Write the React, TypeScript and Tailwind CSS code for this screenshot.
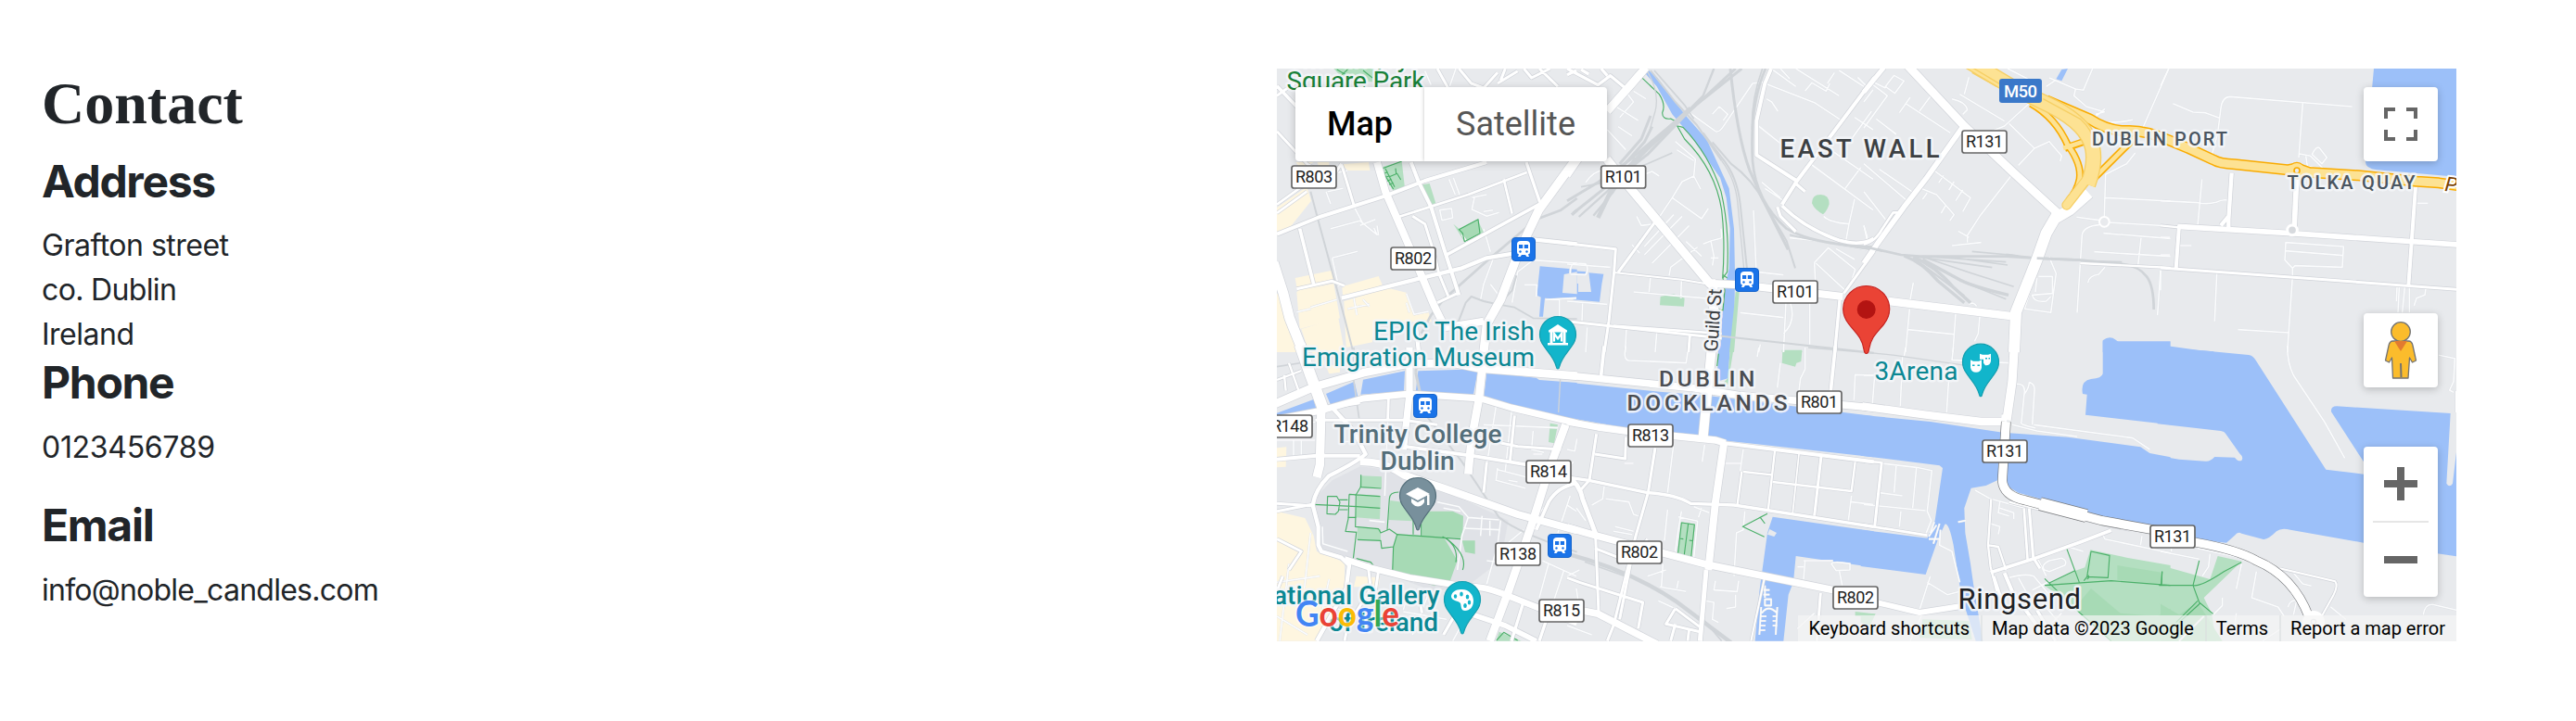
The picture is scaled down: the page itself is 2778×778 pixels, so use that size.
import React from "react";

type Road = [number, string];
type Tile = {
  at: [number, number];
  campus?: string;
  cream?: string;
  water?: string;
  land?: string;
  park?: string;
  lawn?: string;
  path?: string;
  rail?: Road[];
  minor?: string;
  roads?: Road[];
  bridge?: Road[];
  over?: Road[];
};

// Coordinates inside a tile are in thirds of a pixel.
const tiles: Tile[] = [
  {
    at: [1370, 60],
    cream:
      "M21,492 L118,425 L132,470 L60,560 L21,572Z M232,352 L318,345 L322,372 L250,372Z M82,345 L140,345 L100,368Z M80,720 L200,695 L208,735 L88,765Z M85,765 L205,738 L225,850 L95,885Z M232,748 L350,714 L362,742 L300,770 L235,790Z M238,795 L380,752 L442,768 L462,838 L512,832 L522,862 L440,862 L340,862 L330,928 L245,945Z M100,885 L220,850 L240,960 L125,960Z M21,772 L45,775 L78,895 L92,960 L21,960Z M152,345 L190,345 L190,375 L160,372Z",
    water: "M872,682 L992,692 V790 L888,785 L882,845 L870,845 L875,782 L862,776Z",
    land: "M950,708 L992,700 V772 L945,768Z",
    park: "M205,42 L335,42 L330,85 L240,80Z M355,362 L425,342 L435,428 L397,437Z M492,418 L515,414 L535,478 L515,485Z M592,545 L610,560 L670,530 L690,572 L630,606Z",
    lawn: "M612,562 L672,532 L678,575 L628,602Z",
    path: "M610,563 L672,530 L678,576 L628,602 L622,575Z M355,368 L425,342 M360,370 L398,432 M372,366 L402,425 M366,382 L380,377 M372,394 L386,389 M378,406 L392,400 M384,418 L398,412 M385,392 L410,382 L422,402 M407,382 L405,365 M215,45 L262,72 M250,45 L225,68 M300,48 L330,72",
    rail: [
      [8, "M488,900 L520,840 L560,790 L700,665 L860,530 L940,500 L992,462"],
      [6, "M130,440 L162,560 L200,700 L240,850 L268,960"],
      [6, "M796,712 L782,760 L740,806 L690,795 L650,780 L632,800 L608,862"],
      [5, "M740,806 L790,815 L850,850 L992,852"],
      [10, "M975,515 L992,500"],
    ],
    minor:
      "M200,655 L282,634 M195,560 L290,535 L345,580 L335,558 M340,530 L290,550 M345,550 L350,582 M270,488 L300,545 M200,655 L220,745 L238,745 M660,460 L652,498 L700,520 L740,508 M652,460 L700,450 M548,500 L586,495 L590,525 L555,533Z M690,560 L712,635 M440,770 L465,838 L512,828 M720,660 L690,740 L680,790 M712,740 L735,770 M782,800 L800,700 L850,662 L992,672 M822,742 L862,742 L860,780 M592,395 L612,450 M578,400 L598,450 M465,372 L480,405 M500,50 L520,95 M575,105 L560,70 M600,42 L580,100 M690,505 L720,500 M250,820 L320,805 M270,785 L280,840 M300,790 L320,812 M130,815 L215,790 M85,830 L130,820 M500,690 L520,690 M890,790 L990,785 M935,790 L935,850 M440,800 L450,832 M185,440 L235,430 M210,380 L250,372 M180,440 L195,480 M620,580 L640,610",
    roads: [
      [8, "M21,482 L110,418"],
      [8, "M21,510 L118,440"],
      [9, "M21,245 L120,352 L200,395 L230,350"],
      [11, "M21,98 L88,168"],
      [9, "M21,130 L80,88"],
      [9, "M540,42 L575,105 M610,42 L650,90 L690,105 L735,55 M735,90 L800,50 M870,42 L930,100 M760,42 L745,80 M820,42 L845,72 L905,42"],
      [9, "M85,755 L200,730 L240,745"],
      [11, "M95,560 L140,740"],
      [9, "M230,352 L272,490"],
      [12, "M21,578 L160,522 L370,455 L500,405 L700,345"],
      [8, "M415,522 L640,450 L830,378"],
      [9, "M460,520 L500,545 L530,640 L545,705 L575,778 M605,770 L540,800"],
      [12, "M455,345 L480,410 L520,490 L560,620 L610,775"],
      [11, "M570,645 L872,480"],
      [10, "M828,345 L872,475"],
      [8, "M755,400 L782,512"],
      [13, "M230,785 L480,722 L620,688 L700,655 L790,640"],
      [13, "M850,595 L992,610"],
      [24, "M345,345 L372,440 L450,620 L530,810 L565,880 L690,860"],
      [13, "M470,870 L480,960"],
      [28, "M985,340 L868,500 L802,640 L745,790 L700,870 L690,960"],
      [32, "M10,670 L42,770 L62,850 L108,965"],
    ],
  },
  {
    at: [1690, 60],
    water:
      "M248,52 L262,46 L292,72 L380,190 L452,272 L524,430 L540,560 L543,700 L540,960 L495,960 L507,760 L524,690 L527,560 L515,460 L495,395 L400,260 L340,190 L290,100Z M70,703 L118,707 L112,740 L105,797 L20,790 L20,772 L26,738 L36,738 L36,765 L78,765Z M-20,770 L20,775 V788 L-20,784Z M20,697 L66,700 L64,708 L20,704Z M-20,692 L10,694 L8,704 L-20,702Z",
    park: "M792,478 Q792,450 820,450 Q848,450 848,480 Q842,502 828,514 Q800,498 792,478Z M302,780 L345,772 L380,785 L378,812 L300,808Z M545,765 L557,765 L540,960 L525,960Z M695,953 H760 V960 H695Z",
    path: "M252,46 L235,65 L298,125 Q320,160 308,185 Q308,208 335,204 L350,212 M355,226 L380,270 Q480,370 500,500 Q512,600 503,722 M358,228 L375,232 Q460,320 498,440 Q526,560 518,700 L504,720 L510,760 L504,825 L492,822 M505,710 L518,720",
    rail: [
      [9, "M0,470 L100,410 L200,340 L360,205 L565,42"],
      [9, "M20,510 L120,430 L260,320 L380,195 L545,42"],
      [14, "M100,525 L160,400 L260,300 L400,170"],
      [7, "M38,522 L140,430 L240,330 M85,518 L150,440 L220,330"],
      [9, "M170,350 L240,270 L270,195 M170,370 L250,280 L275,230"],
      [5, "M180,380 L260,350 L340,315 M45,425 L180,400"],
      [7, "M360,210 L440,130 L475,42"],
      [4, "M260,52 Q300,120 285,180 L262,260"],
      [6, "M270,48 L350,150 L420,225 L500,340"],
      [5, "M282,48 L380,160 L410,205"],
      [6, "M440,250 L500,330 Q550,390 560,480 L582,692"],
      [4, "M500,340 Q545,400 552,480 L572,690"],
      [9, "M528,42 Q550,260 590,370 L630,460 L715,628"],
      [6, "M470,280 L530,350 Q600,400 640,480 L710,600 L738,688"],
      [8, "M642,42 Q590,160 600,340 Q610,470 710,560 Q790,610 992,620"],
      [5, "M632,42 Q596,140 598,240 M720,580 Q800,600 992,630"],
      [6, "M0,866 L130,872 L500,908 L992,962"],
    ],
    minor:
      "M300,520 L340,460 L372,408 L410,390 L432,432 M340,460 L435,528 L457,495 M250,618 L345,515 M250,645 L372,520 M275,672 L395,550 M330,712 L335,685 L422,620 M440,610 L465,600 L475,650 L470,680 M465,655 L490,655 M465,600 L500,590 L498,560 M410,390 L415,335 L350,278 M355,305 L410,340 M225,520 L240,550 L280,545 M210,612 L235,640 M385,602 L435,650 M640,90 L800,152 L885,208 M740,42 L880,130 M690,42 L720,75 M645,140 L662,150 L682,180 M612,222 L700,292 M770,115 L792,88 L838,115 L850,90 M900,430 L950,362 M865,55 L842,90 M880,48 L960,100 M780,345 L990,500 M845,300 L990,400 M630,410 L690,460 M830,520 Q850,540 912,545 L930,465 M902,600 L912,545 M660,42 L740,100 M640,430 L700,470 M480,245 Q492,250 505,230 L600,90 L640,85 M390,180 L480,245 M470,190 L492,165 L520,190 L505,210 M603,500 L612,700 L700,710 M270,715 L265,765 M215,765 L500,790 M370,725 L368,785 M0,795 L130,805 M560,832 L700,848 M708,800 L700,960 M785,800 V935 M722,800 Q742,860 700,900 M800,670 L805,770 M800,670 L845,622 L932,692 L915,745 L900,760 L805,672 M870,625 L930,660 M720,590 L800,598 L990,632 M185,110 L215,150 L170,200 M215,115 L255,140 M150,160 L230,210 M130,240 L190,305 M165,230 L210,260 M60,410 Q90,370 120,372 M250,385 L275,375 L298,390 M0,675 L140,685 M10,705 Q10,670 30,672 L60,674 Q72,690 60,710 L10,708 M65,880 L60,960 M192,880 L188,960 M290,895 L285,960 M625,935 L620,960 M50,800 L48,860 M970,100 L940,70 M850,270 L870,230 M930,200 L990,240 M990,110 L960,150 M985,180 L920,270 M960,550 L972,590",
    roads: [
      [10, "M0,42 L100,95 L140,65 L200,115 M45,45 L70,60 M110,42 L130,65 M0,62 L30,48"],
      [9, "M165,702 L285,538"],
      [6, "M150,702 L370,725 L470,742"],
      [9, "M0,608 L157,626 L152,700 L135,860 L120,960"],
      [9, "M0,860 L500,915"],
      [9, "M397,905 L393,960"],
      [8, "M150,875 L500,900"],
      [12, "M660,42 L640,90 L613,210 L613,322 L742,405"],
      [12, "M995,70 L742,408 L695,482"],
      [10, "M735,410 L770,440"],
      [10, "M680,490 L690,520 L740,570"],
      [11, "M695,486 Q770,560 880,598 Q950,618 992,592"],
      [9, "M992,635 L895,770"],
      [10, "M882,790 L866,960"],
      [22, "M0,388 L40,330"],
      [26, "M130,180 L210,90 L255,38"],
      [28, "M128,335 L180,400 L462,738 L480,738"],
      [24, "M470,738 L560,742 L892,780"],
      [30, "M472,740 L475,800 L470,960"],
    ],
  },
  {
    at: [2010, 60],
    water: "M640,45 L660,42 L640,82 L622,76Z M773,960 V922 Q795,905 815,920 L830,932 L992,946 V960Z",
    rail: [
      [8, "M0,618 L120,645 L180,650 L460,650 L560,656 L700,662 L840,675 Q890,682 915,715 Q938,745 938,822"],
      [5, "M835,668 L700,664"],
      [10, "M130,648 Q190,670 240,730 L325,800 M160,652 Q230,680 290,750 L345,800"],
      [7, "M160,655 Q220,700 325,778"],
      [10, "M190,660 L300,720 Q340,745 468,775"],
      [5, "M180,660 L340,740 L460,788 M200,655 L350,705 L485,748 M160,650 L415,686 M170,650 L300,655 L465,678 M190,650 L460,668 M350,634 L470,645 L560,655"],
      [9, "M460,645 L500,650"],
    ],
    minor:
      "M30,95 L76,130 L0,235 M150,135 L115,185 M135,155 L280,250 M40,205 L105,255 M180,180 L217,130 M70,100 L98,64 L130,82 L100,122Z M20,80 L70,105 M310,125 L455,212 M285,140 Q330,150 335,175 L320,190 M325,125 L340,70 M540,150 L455,228 L400,250 M470,220 L552,300 L500,355 M552,300 L600,278 L640,325 L635,342 M225,370 L345,460 L320,505 M242,412 L258,388 M275,435 L292,408 M297,470 L320,435 M185,430 L235,450 L292,515 L278,535 M250,510 L265,485 M190,465 L205,445 M480,385 L375,520 L335,582 L335,605 M305,568 L340,588 M285,615 L380,605 M992,30 L900,240 M778,520 L782,385 L850,350 L878,315 M780,460 L992,471 M688,523 L762,533 M792,540 L992,552 M762,548 Q712,552 706,580 L690,832 M775,575 L992,592 M745,635 L992,650 M897,590 L887,680 M960,695 L950,840 M780,685 L760,708 Q728,712 725,735 M148,820 L135,960 M143,887 L290,902 M297,835 L288,960 M375,845 L370,900 L358,925 M160,735 L150,790 M555,712 L520,820 L605,832 L622,705 L605,665 L600,650 M565,715 H610 V770 L545,775 Q550,800 590,795 L605,780 M560,720 L555,765 M600,72 L685,108 L680,130 L720,165 L778,182 L750,190 M685,108 L710,112 L740,42 M760,215 Q820,220 870,208 M590,100 L620,80 M740,205 L780,172 M0,350 L140,470 M50,368 L155,440 M0,440 L70,530 M0,550 L10,595 M465,42 L530,75 M340,805 Q355,795 365,812",
    roads: [
      [7, "M700,672 L992,687"],
      [8, "M0,611 Q40,600 60,560 L95,508 H115"],
      [15, "M65,38 L0,118"],
      [17, "M322,228 L200,400 L130,490 L50,600 L0,672"],
      [27, "M140,30 L325,228 L480,375 L625,508"],
      [25, "M80,795 L475,843"],
      [36, "M728,445 L665,500 L622,525"],
      [36, "M628,510 L590,575 L560,660 L492,830 L486,960"],
    ],
  },
  {
    at: [2330, 60],
    water: "M690,42 H957 V392 L700,370 Q660,365 663,340 Z M0,944 L172,958 V966 H0Z",
    minor:
      "M26,42 L0,98 M165,325 L185,250 L195,170 Q200,133 225,133 L620,165 M40,155 L105,183 L145,185 L190,202 M460,155 L447,330 M490,320 Q505,290 515,300 L538,330 L522,350Z M450,318 L485,325 L525,365 M470,325 L475,358 L520,366 M215,468 Q200,465 180,475 Q150,482 120,476 L0,470 M134,400 L120,550 M0,588 H30 M60,615 H100 M0,645 H30 M405,605 L592,618 L588,685 L435,680 L427,688 L402,662Z M403,632 L590,647 M427,688 V715 L410,960 M182,705 L175,860 M250,887 L415,897 M765,750 L763,795 M772,750 L768,832 M790,750 L782,832 M805,750 V832 M858,755 L855,775 L828,785 L820,810 M830,478 H865 M0,695 V760",
    roads: [
      [12, "M60,550 L50,690"],
      [13, "M230,380 L220,530 L220,560 M220,520 L195,550"],
      [17, "M440,400 L432,565"],
      [17, "M55,553 L420,575 L960,612"],
      [9, "M0,687 L420,717 L960,757"],
      [12, "M825,425 L802,745"],
      [7, "M0,550 L60,556"],
    ],
  },
  {
    at: [1370, 375],
    campus: "M150,480 L200,430 L290,385 L380,395 L600,480 L770,560 L745,690 L640,770 L530,790 L330,715 L165,650 L140,520Z",
    cream:
      "M21,530 L112,552 L140,610 L150,660 L240,695 L240,780 L150,950 L21,950Z M278,740 L355,745 L350,775 L270,775Z M245,870 L280,870 L240,930Z M21,325 L52,322 L50,386 L21,388Z M130,0 L160,0 L175,55 L150,60Z M180,60 L225,55 L225,80 L190,85Z",
    water:
      "M21,220 L21,212 L140,168 L152,212Z M180,150 L272,110 L286,172 L200,197Z M300,104 L435,76 L432,142 L292,152Z M478,76 L672,70 L657,152 L470,146Z M700,80 L860,98 L870,105 L992,114 V238 L690,168Z",
    park: "M293,415 L360,418 V455 L288,453Z M280,478 L357,480 L354,556 L275,550Z M282,583 L357,588 V625 L280,622Z M388,495 L460,505 V562 L382,558Z M905,245 L930,250 L918,310 L900,306Z M740,920 L812,950 H730Z",
    lawn: "M490,530 L590,530 L624,545 L622,618 L490,610Z M410,605 L560,612 L605,690 L580,760 L530,772 L395,727 L398,645Z M620,625 H662 V668 L630,662Z",
    path: "M140,508 L280,515 L355,520 M293,412 V450 L275,480 M293,452 L358,456 M255,475 L355,482 M255,475 L252,555 L243,595 L280,598 M250,550 H278 M185,482 L215,482 L225,500 L220,530 L210,540 L183,538Z M222,493 H250 M222,525 H250 M277,480 L275,580 L350,587 L357,600 L385,588 L410,605 L398,645 L360,650 L357,625 L282,622 M278,600 L268,685 M278,683 L325,695 L335,708 L395,727 L398,645 M410,605 L615,620 M415,468 Q385,468 385,490 L378,590 M462,560 V605 M488,570 V608 M557,612 Q610,640 600,695 M565,615 Q640,670 622,720 M732,948 L755,922 L800,948",
    rail: [
      [9, "M470,80 L485,150"],
      [6, "M500,215 L620,370 L740,550 Q800,600 992,662"],
      [5, "M270,0 V110 L300,320"],
      [9, "M480,0 L470,80"],
      [5, "M21,62 L130,45"],
      [4, "M938,100 L932,210"],
    ],
    minor:
      "M168,580 L170,635 L250,660 M540,500 L610,515 L640,550 L740,558 M640,550 L620,610 L605,720 M745,560 L735,640 L700,765 M560,520 L615,530 M685,545 L680,610 M710,560 V610 M625,585 L740,590 M735,390 L730,430 L825,455 M735,395 L830,420 M770,430 L800,435 M850,270 L845,330 L885,340 M850,345 H880 M235,305 L295,302 M21,300 L145,300 M380,235 L370,480 M75,300 V350 M100,300 V350 M690,250 L930,260 M730,190 L700,380 M780,210 L760,400 M820,590 L760,640 M970,480 L930,600 M900,500 L850,560 M880,690 L990,740 M900,700 L870,810 M950,720 L910,840 M21,760 L160,740 M60,700 L30,950 M130,600 L110,780 M190,750 L160,890 M60,800 L230,850 M21,870 L120,930 M430,855 L570,880 M450,780 L430,850 M510,800 L460,930 M640,860 L590,950 M21,250 L160,240 M320,560 L370,565 M700,690 L780,700",
    roads: [
      [7, "M60,50 L95,150 M21,105 L100,75 M45,90 L50,140"],
      [9, "M145,235 L430,235 L540,250"],
      [9, "M382,160 L380,235"],
      [8, "M160,200 L290,180"],
      [11, "M430,320 L650,350 L925,395"],
      [9, "M655,290 L800,320 L940,330 M700,370 L690,470 M790,220 L775,370"],
      [9, "M21,505 L135,512 M21,530 L135,508"],
      [12, "M21,362 L150,350 L290,350"],
      [13, "M205,200 L270,270 L308,345 Q280,370 190,415 Q145,460 137,510 L155,580 L155,640 L165,660 L230,680 L255,705 L245,780 L150,950"],
      [9, "M21,620 L100,660 L60,720 M40,740 L21,790"],
      [9, "M315,700 L325,780 L250,900 L240,950 M350,720 L340,790"],
      [10, "M820,820 L780,950 M900,860 L870,950 M480,780 L490,860 M560,930 L600,860"],
      [11, "M990,440 Q930,450 900,500 L860,590"],
      [24, "M290,370 Q370,368 430,412 L560,455 L800,540 L992,592"],
      [20, "M240,685 L330,715 L450,745 L640,775 Q690,770 780,808 L992,892"],
      [17, "M640,860 L760,900 L860,950"],
      [26, "M955,250 L900,400 L850,560 L770,790 L710,950"],
      [22, "M450,0 L450,150 L430,330"],
      [26, "M685,70 L675,165 L650,300 L640,410"],
      [21, "M21,232 L160,205 L300,165 L450,150 L680,165 L780,195 L992,245"],
      [26, "M10,185 L140,128 L300,82 L450,52 L600,52 L680,68 L992,92"],
      [36, "M95,-10 L130,90 L175,210"],
      [28, "M165,190 L160,380 L150,420"],
    ],
  },
  {
    at: [1690, 375],
    water:
      "M-10,112 L300,143 L450,155 L992,222 V355 L500,300 L200,262 L-10,225Z M490,-5 H528 L520,100 L485,110Z M665,548 L992,595 V712 L740,675 L732,760 L716,800 L700,950 L608,950 L622,790 L648,600Z",
    park: "M528,-5 H540 L520,120 L500,120 L520,100Z M697,10 L760,12 L757,45 L742,50 L738,62 L695,50Z M370,565 L414,572 L402,683 L356,675Z M932,855 L992,862 V870 H932Z",
    land: "M655,588 L678,600 L670,612 L648,605Z",
    path: "M370,567 L412,573 L401,680 L358,672Z M392,570 L378,678 M364,618 L376,620 M395,624 L407,626 M648,538 L568,580 L638,613 M625,550 L640,570 M648,538 L620,552 M490,20 L485,60",
    rail: [
      [13, "M0,668 Q200,720 350,820 L530,955"],
      [5, "M57,694 L200,745 M440,880 L500,950"],
      [4, "M780,0 L992,18"],
    ],
    minor:
      "M190,-5 Q180,40 200,42 L385,50 L393,-5 M345,310 L325,470 M445,315 L437,370 M570,330 L560,400 M510,375 H565 M620,0 L615,30 M770,0 L770,70 L755,100 L750,140 M690,50 L680,130 M928,170 L932,88 L990,90 M0,330 L25,335 L32,295 M0,395 L20,370 M120,450 L115,490 L80,510 M125,490 L200,500 L215,540 L230,545 M150,595 L210,605 M155,580 L215,595 M325,525 L315,625 M370,530 L360,590 L350,660 M360,548 L422,562 L410,680 M575,530 L570,590 L548,600 L540,740 M480,755 L475,785 L550,790 L555,755 M545,800 V840 L515,845 M445,820 L475,825 L470,880 L490,890 M260,740 L320,720 M300,775 L385,790 M360,755 L355,780 M310,700 L305,775 M920,480 L910,560 M920,500 L990,508 M770,690 L765,750 M745,710 H765 M765,690 L860,690 M855,700 Q860,690 915,700 V720 L870,722Z M880,720 L890,770 M215,375 L185,375 M30,520 L60,560 M0,510 L30,530 M435,520 L425,550 M410,515 L460,535 M295,820 L350,845 M800,860 L745,910 M640,770 V810 M628,840 L622,930 M680,840 L675,930 M635,785 H655 M635,800 H655 M640,815 H660 V835 H640Z M630,860 Q650,830 680,860 M628,870 H645 M627,885 H643 M626,900 H642 M625,915 H641 M665,870 H680 M665,885 H680 M665,900 H680 M0,740 L40,720 M30,780 L40,850 M0,900 L80,930",
    roads: [
      [9, "M95,280 L72,430 L40,465"],
      [9, "M90,345 L188,360 L190,290"],
      [9, "M285,325 L262,470 L222,610 L150,900 L130,950"],
      [7, "M672,335 L650,530 M570,402 L662,412 M565,402 L550,515"],
      [9, "M822,352 L800,545"],
      [7, "M932,370 L920,465 L665,435"],
      [5, "M750,345 L730,535"],
      [6, "M640,740 L595,950"],
      [9, "M820,795 L808,950"],
      [9, "M0,745 L40,760 L245,825 L230,910 M205,700 L170,880"],
      [9, "M350,845 L320,895 L430,920 M350,845 L430,905 M350,895 L335,950 M395,910 L390,950"],
      [9, "M90,650 L205,695 L260,620"],
      [10, "M0,420 L70,430 L260,470 Q350,475 400,505 L540,510 L992,580"],
      [11, "M120,-5 L110,90 M868,-5 L852,150"],
      [15, "M0,415 Q40,440 50,490 L95,610"],
      [9, "M92,610 L102,860"],
      [23, "M0,842 L100,862 L290,960"],
      [23, "M0,582 L90,608 L450,702 L862,785"],
      [15, "M450,720 L430,950"],
      [24, "M508,305 L480,500 L457,720"],
      [12, "M510,310 L992,370"],
      [22, "M0,240 L100,258 L200,272 L480,300 L512,310"],
      [30, "M468,-5 L440,290"],
      [23, "M0,90 L400,130 L560,155 L992,195"],
    ],
  },
  {
    at: [2010, 375],
    water:
      "M-10,218 L215,240 L450,275 L660,290 L895,322 L925,342 L992,355 V600 L770,545 L500,470 L432,430 L395,447 L347,455 L325,520 L328,600 L345,700 L355,770 L385,950 L362,950 L330,850 L310,770 L290,640 Q275,565 262,572 L240,620 L200,735 L-10,708 V590 L205,617 L230,560 L255,390 L245,382 L-10,350Z M773,-20 V85 Q770,100 735,102 Q700,108 708,150 L722,152 L717,218 L992,250 V-20Z",
    park: "M733,655 L850,680 L992,705 V950 L800,950 L690,850 L585,770 L685,722 L715,712Z M-10,860 L38,862 L20,900 L-10,890Z M190,880 L340,885 L350,945 L180,940Z",
    lawn: "M820,705 L965,728 V765 L820,752Z M735,780 L830,860 L950,870 L992,845 V950 L800,950 L680,845Z",
    path: "M585,770 L800,755 L992,770 M600,762 L683,722 M656,650 L697,760 M585,748 L700,860 L800,950 M735,660 L795,673 L790,745 L722,742Z M722,742 L712,755 M722,735 Q735,742 722,750 M965,725 L962,768",
    rail: [[4, "M0,15 L100,25 L330,58"]],
    minor:
      "M135,0 L130,30 M125,30 L118,190 M290,0 L285,40 L470,50 M278,50 L268,210 M35,90 L28,180 M0,90 H35 M490,118 Q520,115 520,140 L510,240 Q500,250 555,260 M535,112 Q555,120 552,140 L545,250 M520,150 Q535,130 535,112 M480,250 L560,270 L690,288 M550,250 L870,293 L925,330 M55,375 L170,388 L220,398 L205,530 L218,560 L200,605 M105,380 L98,470 M170,390 L158,520 M50,470 L125,480 M0,508 L200,528 M120,530 L115,580 M360,462 L410,490 L520,520 M440,500 L435,535 L470,545 M410,570 L440,580 L435,605 M440,520 L485,535 V555 M228,565 L215,600 M245,570 L225,635 M235,575 L210,612 M248,590 L245,640 L285,660 L310,760 M210,620 H245 M215,740 L180,850 M205,760 L270,800 L310,790 M660,645 L710,660 M585,720 Q570,705 600,690 L640,682 Q660,690 650,705 L600,725Z M470,745 Q520,730 550,740 L600,800 M500,745 L530,800 M545,785 L595,760 M560,680 L590,740 M330,560 L305,565 M770,600 L780,620 L992,665 M900,610 L895,640 M580,830 L640,900 M640,860 L600,900 M190,860 L150,950 M0,905 L60,940 M480,500 L475,485",
    roads: [
      [8, "M0,368 L58,372"],
      [9, "M58,370 L35,580"],
      [8, "M0,575 L205,608"],
      [7, "M412,490 L402,640 L410,710 L430,790 M405,640 L435,645 L460,720 M470,500 L700,555 L860,590"],
      [8, "M518,520 L530,690"],
      [9, "M535,520 L548,680 L570,715"],
      [11, "M410,728 L560,680 L700,630 L800,592"],
      [12, "M455,730 L480,790 L560,900"],
      [10, "M560,850 L620,950 M420,740 L450,830"],
      [18, "M40,825 L180,858 L310,838"],
      [25, "M-5,190 L200,218 L380,240 L450,240"],
      [28, "M487,-5 L480,110 L462,235"],
      [30, "M445,232 L462,232"],
    ],
    bridge: [
      [28, "M460,240 L448,430 Q452,480 520,494 L770,560 L992,600"],
      [40, "M570,506 L720,545"],
    ],
  },
  {
    at: [2330, 375],
    water:
      "M-10,-10 L120,8 L285,24 Q298,26 306,38 L535,395 L657,410 V632 L420,590 Q390,582 375,595 Q345,625 330,620 L262,602 Q250,595 240,608 L213,632 L-10,608 V350 L60,362 L145,368 Q160,370 175,354 L240,356 Q250,370 262,366 Q270,355 255,342 L210,278 Q207,272 195,270 L-10,247Z M570,190 L938,213 L925,440 Q935,455 945,440 L958,330 V676 L657,632 V370 L552,208 Q550,190 570,190Z",
    park: "M0,705 L160,750 L185,675 L262,692 L140,810 L165,860 L180,950 H-10Z",
    lawn: "M0,830 L60,865 L120,825 L200,950 H0Z",
    path: "M-5,770 L105,770 Q130,775 205,725 L262,695 M125,690 L105,770 L125,825 L170,862 M120,820 L50,890 M128,828 L60,890 M5,725 L3,770",
    minor:
      "M410,-5 Q410,50 430,90 L530,240 L596,358 M900,25 L952,35 L948,110 L935,138 L948,145 M0,660 L125,685 M160,668 L155,710 L135,740 M262,700 L245,782 M245,860 L240,900 M200,810 V835 L170,865 M310,725 L295,810 L380,840 L400,870 M430,730 L460,765 L488,772 M412,840 Q420,815 440,820 L430,865 M550,840 L600,880 M850,865 Q855,830 880,832 L957,850 M390,910 L330,950 M120,650 L300,690 M35,650 V660 M60,950 L140,870",
    roads: [[6, "M385,715 L565,757 Q575,770 560,800 L510,890"], [4, "M955,140 V210"]],
    bridge: [[27, "M-10,595 L110,630 Q250,655 310,690 Q430,740 480,872"]],
    over: [[30, "M480,865 L500,880"]],
  },
];

function Layer({ pick }: { pick: (t: Tile) => React.ReactNode }) {
  return (
    <>
      {tiles.map((t, i) => (
        <g key={i} transform={`translate(${t.at[0]} ${t.at[1]}) scale(0.33333)`}>
          {pick(t)}
        </g>
      ))}
    </>
  );
}

const strokes = (list: Road[] | undefined, color: string, extra = 0) =>
  (list ?? []).map(([w, d], i) => <path key={i} d={d} stroke={color} strokeWidth={w + extra} fill="none" />);

const motorwayEast = "M590,145 L730,205 Q790,245 850,243 Q910,240 990,275 L1050,300 L1130,337 Q1150,350 1200,352 L1370,370 L1400,364 L1440,378 L1600,388 L1790,407 L1860,412 L1930,422";
const motorwayMain = "M335,15 L480,102 L610,165 Q725,225 740,300 Q750,350 725,418";

function Badge({ x, y, children }: { x: number; y: number; children: string }) {
  return (
    <g>
      <rect x={x - 24} y={y - 12} width="48" height="24" rx="2.5" fill="#fff" stroke="#666" strokeWidth="1.7" />
      <text x={x} y={y + 6.3} textAnchor="middle" fontSize="18" textLength="40" fill="#222">
        {children}
      </text>
    </g>
  );
}

function Train({ x, y }: { x: number; y: number }) {
  return (
    <g transform={`translate(${x} ${y})`}>
      <rect x="-12.5" y="-12.5" width="25" height="25" rx="3.5" fill="#1a73e8" stroke="#1765cc" />
      <path d="M-3,-9 H3 Q7,-9 7,-5.500 V3 Q7,5 5,5.500 L6,8 H3.500 L2,6 H-2 L-3.500,8 H-6 L-5,5.500 Q-7,5 -7,3 V-5.500 Q-7,-9 -3,-9Z" fill="#fff" />
      <path d="M-5,-5 H-0.800 V-1 H-5Z M0.800,-5 H5 V-1 H0.800Z" fill="#1a73e8" />
      <circle cx="-3.500" cy="2.500" r="1.200" fill="#1a73e8" />
      <circle cx="3.500" cy="2.500" r="1.200" fill="#1a73e8" />
    </g>
  );
}

function Pin({ x, y, fill, edge, children }: { x: number; y: number; fill: string; edge: string; children: React.ReactNode }) {
  return (
    <g transform={`translate(${x} ${y})`}>
      <path
        d="M0,37 Q-1.300,37 -1.700,34.500 C-4,25 -10,20 -15,12.500 Q-19.500,6.500 -19.500,0 A19.500,19.500 0 0 1 19.500,0 Q19.500,6.500 15,12.500 C10,20 4,25 1.700,34.500 Q1.300,37 0,37Z"
        fill={fill}
        stroke={edge}
        strokeWidth="1.200"
      />
      {children}
    </g>
  );
}

type LabelProps = {
  x: number;
  y: number;
  size: number;
  w?: number;
  fill: string;
  weight?: number;
  anchor?: "start" | "end" | "middle";
  children: string;
};

function Label({ x, y, size, w, fill, weight = 400, anchor = "start", children }: LabelProps) {
  return (
    <text
      x={x}
      y={y}
      fontSize={size}
      textLength={w}
      fontWeight={weight}
      textAnchor={anchor}
      fill={fill}
      stroke="#f4f6f9"
      strokeOpacity="0.92"
      strokeWidth="5"
      strokeLinejoin="round"
      paintOrder="stroke"
    >
      {children}
    </text>
  );
}

function MapCanvas() {
  const teal = "#0b8793";
  return (
    <svg viewBox="1377 74 1272 618" className="block h-[618px] w-[1272px] font-[Roboto,sans-serif]">
      <rect x="1377" y="74" width="1272" height="618" fill="#e8eaed" />
      <g strokeLinejoin="round" strokeLinecap="butt">
        <Layer pick={(t) => t.campus && <path d={t.campus} fill="#e0e2e7" />} />
        <Layer pick={(t) => t.cream && <path d={t.cream} fill="#fef6e0" />} />
        <Layer pick={(t) => t.water && <path d={t.water} fill="#9cc0f9" />} />
        <Layer pick={(t) => t.land && <path d={t.land} fill="#e8eaed" />} />
        <Layer pick={(t) => t.park && <path d={t.park} fill="#b4dfc1" />} />
        <Layer pick={(t) => t.lawn && <path d={t.lawn} fill="#a7dab5" />} />
        <Layer pick={(t) => t.minor && <path d={t.minor} fill="none" stroke="#dcdfe4" strokeWidth="6.500" />} />
        <Layer pick={(t) => t.minor && <path d={t.minor} fill="none" stroke="#fbfcfd" strokeWidth="4.800" />} />
        <Layer pick={(t) => t.path && <path d={t.path} fill="none" stroke="#4bb069" strokeWidth="3.400" />} />
        <Layer pick={(t) => strokes(t.roads, "#d0d3d9", 4)} />
        <Layer pick={(t) => strokes(t.rail, "#d0d4d8")} />
        <Layer pick={(t) => strokes(t.roads, "#ffffff")} />
        <Layer pick={(t) => strokes(t.bridge, "#77797c", 4)} />
        <Layer pick={(t) => strokes(t.bridge, "#ffffff")} />
        <Layer pick={(t) => strokes(t.over, "#ffffff")} />
        <g transform="translate(2010 60) scale(0.33333)" fill="none">
          <path d="M560,656 L700,662 M0,618 L60,632" stroke="#d0d4d8" strokeWidth="8" />
          <circle cx="778" cy="538" r="16" stroke="#fff" strokeWidth="6" fill="#e8eaed" />
          <g stroke="#f9ab00">
            <path d={motorwayEast} strokeWidth="36" />
            <path d="M540,155 Q620,200 660,290 Q705,350 698,400 Q690,440 662,470" strokeWidth="24" />
            <path d="M650,300 L720,276 M740,402 L880,262" strokeWidth="24" />
            <circle cx="1401" cy="372" r="26" strokeWidth="4" fill="#fde293" />
          </g>
          <g stroke="#fde293">
            <path d={motorwayEast} strokeWidth="27" />
            <path d="M540,155 Q620,200 660,290 Q705,350 698,400 Q690,440 662,470" strokeWidth="15" />
            <path d="M645,300 L725,274 M735,407 L885,257" strokeWidth="14" />
          </g>
          <path d={motorwayMain} stroke="#f6cf65" strokeWidth="52" />
          <path d="M722,400 L656,484" stroke="#f6cf65" strokeWidth="32" strokeLinecap="round" />
          <path d={motorwayMain} stroke="#fde293" strokeWidth="44" />
          <path d="M724,396 L656,484" stroke="#fde293" strokeWidth="25" strokeLinecap="round" />
          <path d="M350,38 L440,92 M580,140 L700,205 Q740,240 748,290 M350,55 L430,100" stroke="#f6cf65" strokeWidth="4" />
          <circle cx="1401" cy="372" r="9" stroke="#f9ab00" strokeWidth="5" fill="#e8eaed" />
          <circle cx="1386" cy="565" r="16" stroke="#fff" strokeWidth="9" fill="#d7dade" />
        </g>
        <g transform="translate(2330 375) scale(0.33333)" fill="none">
          <circle cx="495" cy="888" r="22" stroke="#fff" strokeWidth="28" fill="#fff" />
          <circle cx="495" cy="888" r="8" stroke="#d7dade" strokeWidth="4" />
        </g>
      </g>

      <Label x={1462} y={72} size={28} anchor="middle" fill="#188038">Mountjoy</Label>
      <Label x={1387.500} y={96.500} size={28} w={149} fill="#188038">Square Park</Label>
      <Label x={1481} y={366.500} size={28} w={174} fill={teal}>EPIC The Irish</Label>
      <Label x={1404} y={394.500} size={28} w={251} fill={teal}>Emigration Museum</Label>
      <Label x={1438.500} y={478} size={28} w={181} weight={500} fill="#546e7a">Trinity College</Label>
      <Label x={1488.500} y={506.500} size={28} w={80} weight={500} fill="#546e7a">Dublin</Label>
      <Label x={1552.500} y={652} size={28} anchor="end" weight={500} fill={teal}>National Gallery</Label>
      <Label x={1433} y={680.500} size={28} w={118} weight={500} fill={teal}>of Ireland</Label>
      <Label x={1919.500} y={169.500} size={27.500} w={172} weight={500} fill="#3c4043">EAST WALL</Label>
      <Label x={2256} y={157} size={20} w={146} weight={500} fill="#4a5560">DUBLIN PORT</Label>
      <Label x={2466.500} y={203.500} size={20} w={138} weight={500} fill="#4a5560">TOLKA QUAY</Label>
      <Label x={1789} y={416.500} size={24.500} w={103.500} weight={500} fill="#4a4d52">DUBLIN</Label>
      <Label x={1754.500} y={443} size={24.500} w={173} weight={500} fill="#4a4d52">DOCKLANDS</Label>
      <Label x={2021.500} y={409.500} size={28} w={90} fill={teal}>3Arena</Label>
      <Label x={2111.500} y={657} size={31} w={132.500} fill="#202124">Ringsend</Label>
      <g transform="translate(1852 380) rotate(-86)">
        <Label x={0} y={0} size={20.500} w={68} fill="#3c4043">Guild St</Label>
      </g>
      <g transform="translate(2636 206) rotate(6)">
        <text fontSize="22" fontStyle="italic" fill="#7a4100" stroke="#fff" strokeWidth="4" paintOrder="stroke">P</text>
      </g>

      <Badge x={1417} y={191}>R803</Badge>
      <Badge x={1524} y={279}>R802</Badge>
      <Badge x={1750.700} y={191}>R101</Badge>
      <Badge x={1936} y={315}>R101</Badge>
      <Badge x={2140} y={153}>R131</Badge>
      <Badge x={1391} y={460}>R148</Badge>
      <Badge x={1670} y={509}>R814</Badge>
      <Badge x={1637} y={598}>R138</Badge>
      <Badge x={1684} y={659}>R815</Badge>
      <Badge x={1962} y={434}>R801</Badge>
      <Badge x={1780} y={470}>R813</Badge>
      <Badge x={1768} y={596}>R802</Badge>
      <Badge x={2001} y={645}>R802</Badge>
      <Badge x={2162} y={487}>R131</Badge>
      <Badge x={2343} y={579}>R131</Badge>
      <rect x="2156" y="85" width="46" height="26" rx="3" fill="#3a78c9" />
      <text x="2179" y="104.500" textAnchor="middle" fontSize="18.500" fontWeight="500" textLength="36" fill="#fff">M50</text>

      <Train x={1643} y={269} />
      <Train x={1884} y={302} />
      <Train x={1537} y={438} />
      <Train x={1682} y={589} />

      <Pin x={1680} y={361} fill="#12b5cb" edge="#129eaf">
        <path d="M0,-11 L10,-4.500 V-2.500 H-10 V-4.500Z M-8.500,-2.500 H-5.500 V9 H-8.500Z M5.500,-2.500 H8.500 V9 H5.500Z M-11,9 H11 V11.500 H-11Z" fill="#fff" />
        <path d="M-4,7.500 V-1 L0,4.500 L4,-1 V7.500" fill="none" stroke="#fff" strokeWidth="2.200" />
      </Pin>
      <Pin x={2136} y={390.700} fill="#12b5cb" edge="#129eaf">
        <path d="M-1,-9 L2,-8 H8 L11,-9 V-1 Q10,4 5,3.500 L3,1 V-3 H-1Z" fill="#fff" />
        <path d="M-11,-2.500 L-8,-1 H-2 L1,-2.500 V6 Q0,11 -5,11 Q-10,11 -11,6Z" fill="#fff" />
        <path d="M-9,3.500 H-6.500 M-3.500,3.500 H-1 M5,-4 H7 M8.500,-4 H10" stroke="#12b5cb" strokeWidth="1.500" />
      </Pin>
      <Pin x={1529} y={535} fill="#78909c" edge="#546e7a">
        <path d="M0,-9 L13,-2 L0,5 L-13,-2Z M-7,3 L0,7 L7,3 V7 Q4,11.500 0,11.500 Q-4,11.500 -7,7Z M10,-1 H12.500 V10 H10Z" fill="#fff" />
      </Pin>
      <Pin x={1577} y={647} fill="#12b5cb" edge="#129eaf">
        <path d="M-2,-11 C7,-12 12,-5 12,1 C12,8 8,12 3,12 C-2,12 -1,7 -2,4 C-4,1 -11,2 -12,-3 C-12,-8 -7,-11 -2,-11Z" fill="#fff" />
        <g fill="#12b5cb">
          <ellipse cx="-7.500" cy="-3.500" rx="1.700" ry="2.200" />
          <ellipse cx="-1" cy="-6" rx="1.800" ry="2.500" />
          <ellipse cx="5.500" cy="-3" rx="1.800" ry="2.500" />
          <ellipse cx="7.500" cy="3" rx="1.700" ry="2.500" />
          <ellipse cx="3" cy="6.500" rx="1.800" ry="2.500" />
        </g>
      </Pin>
      <path d="M2012.700,381.500 Q2010.500,381.500 2010,377 C2008,364 2001,359 1994,350 Q1987.700,342 1987.700,333.500 A25,25 0 0 1 2037.700,333.500 Q2037.700,342 2031.500,350 C2024,359 2017.500,364 2015.500,377 Q2015,381.500 2012.700,381.500Z" fill="#ea4335" stroke="#c5221f" strokeWidth="1.200" />
      <circle cx="2012.700" cy="334" r="10" fill="#b31412" />
    </svg>
  );
}

function Pegman() {
  return (
    <svg viewBox="0 0 36 64" className="h-16 w-9">
      <g stroke="#737373" strokeWidth="1.300" strokeLinejoin="round" fill="#fbbc2c">
        <path d="M9.500,22 H26.500 Q30,22 31,27 L34.500,43 L30.500,45 L27.500,40 L26,62 H9.500 L8.500,40 L5.500,45 L1.500,43 L5,27 Q6,22 9.500,22Z" />
        <path d="M18,46 L18.500,61" strokeWidth="2" />
        <circle cx="18" cy="12" r="10.300" />
      </g>
      <path d="M11,22 H25 L18,33Z" fill="#e27b30" />
    </svg>
  );
}

function MapPanel() {
  return (
    <section className="relative h-[618px] w-[1272px] overflow-hidden font-[Roboto,sans-serif]">
      <MapCanvas />
      <div className="absolute left-5 top-5 flex h-20 overflow-hidden rounded bg-white text-[36px] leading-none shadow-[0_2px_8px_rgba(0,0,0,0.22)]">
        <button className="flex w-[139px] items-center justify-center font-medium text-black">Map</button>
        <button className="flex w-[197px] items-center justify-center text-[#565656] shadow-[0_0_4px_rgba(0,0,0,0.25)]">Satellite</button>
      </div>
      <div className="absolute right-5 top-5 flex size-20 items-center justify-center rounded bg-white shadow-[0_2px_8px_rgba(0,0,0,0.22)]">
        <svg viewBox="0 0 18 18" className="size-9" fill="#666">
          <path d="M0,0v6h2V2h4V0H0z M16,0h-4v2h4v4h2V0H16z M16,16h-4v2h6v-6h-2V16z M2,12H0v6h6v-2H2V12z" />
        </svg>
      </div>
      <div className="absolute right-5 top-[264px] flex size-20 items-center justify-center rounded bg-white shadow-[0_2px_8px_rgba(0,0,0,0.22)]">
        <Pegman />
      </div>
      <div className="absolute right-5 top-[408px] flex h-[162px] w-20 flex-col items-center rounded bg-white shadow-[0_2px_8px_rgba(0,0,0,0.22)]">
        <button className="flex size-20 items-center justify-center">
          <svg viewBox="0 0 18 18" className="size-9" fill="#666"><path d="M7,0H11V7H18V11H11V18H7V11H0V7H7Z" /></svg>
        </button>
        <div className="h-[2px] w-[60px] bg-[#e6e6e6]" />
        <button className="flex size-20 items-center justify-center">
          <svg viewBox="0 0 18 18" className="size-9" fill="#666"><path d="M0,7H18V11H0Z" /></svg>
        </button>
      </div>
      <svg viewBox="0 0 130 50" className="absolute left-4 top-[564px] h-[50px] w-[130px]">
        <text x="4" y="38" fontSize="39" textLength="112" lengthAdjust="spacingAndGlyphs" fontWeight="700" stroke="#fff" strokeOpacity="0.65" strokeWidth="3" paintOrder="stroke" className="font-[Lato,sans-serif]">
          <tspan fill="#4285f4">G</tspan>
          <tspan fill="#ea4335">o</tspan>
          <tspan fill="#fbbc05">o</tspan>
          <tspan fill="#4285f4">g</tspan>
          <tspan fill="#34a853">l</tspan>
          <tspan fill="#ea4335">e</tspan>
        </text>
      </svg>
      <div className="absolute bottom-0 right-0 flex h-7 items-center bg-[#f5f5f5]/70 text-[20px] leading-7 text-black">
        <span className="px-3">Keyboard shortcuts</span>
        <span className="border-l-2 border-[#dadde0]/60 pl-[10px] pr-3">Map data ©2023 Google</span>
        <span className="border-l-2 border-[#dadde0]/60 pl-[10px] pr-3">Terms</span>
        <span className="border-l-2 border-[#dadde0]/60 pl-[10px] pr-3">Report a map error</span>
      </div>
    </section>
  );
}

export default function App() {
  const heading = "text-[48px] font-bold leading-[57.6px] tracking-[-1.3px]";
  return (
    <main className="flex h-[778px] w-[2778px] justify-between bg-white pl-[45px] pr-[129px] pt-[74px] font-[Inter,sans-serif] text-[#212529]">
      <section>
        <h1 className="mb-4 font-['Liberation_Serif',serif] text-[64px] font-bold leading-[76.8px]">Contact</h1>
        <h2 className={heading}>Address</h2>
        <p className="mt-[17px] text-[32px] leading-[48px] tracking-[-0.5px]">
          Grafton street
          <br />
          <span className="tracking-[-0.65px]">co. Dublin</span>
          <br />
          Ireland
        </p>
        <h2 className={`-mt-px ${heading}`}>Phone</h2>
        <p className="mt-[17px] text-[32px] leading-[48px] tracking-[-0.3px]">0123456789</p>
        <h2 className={`mt-[31px] ${heading}`}>Email</h2>
        <p className="mt-[17px] text-[32px] leading-[48px] tracking-[-0.75px]">info@noble_candles.com</p>
      </section>
      <MapPanel />
    </main>
  );
}
